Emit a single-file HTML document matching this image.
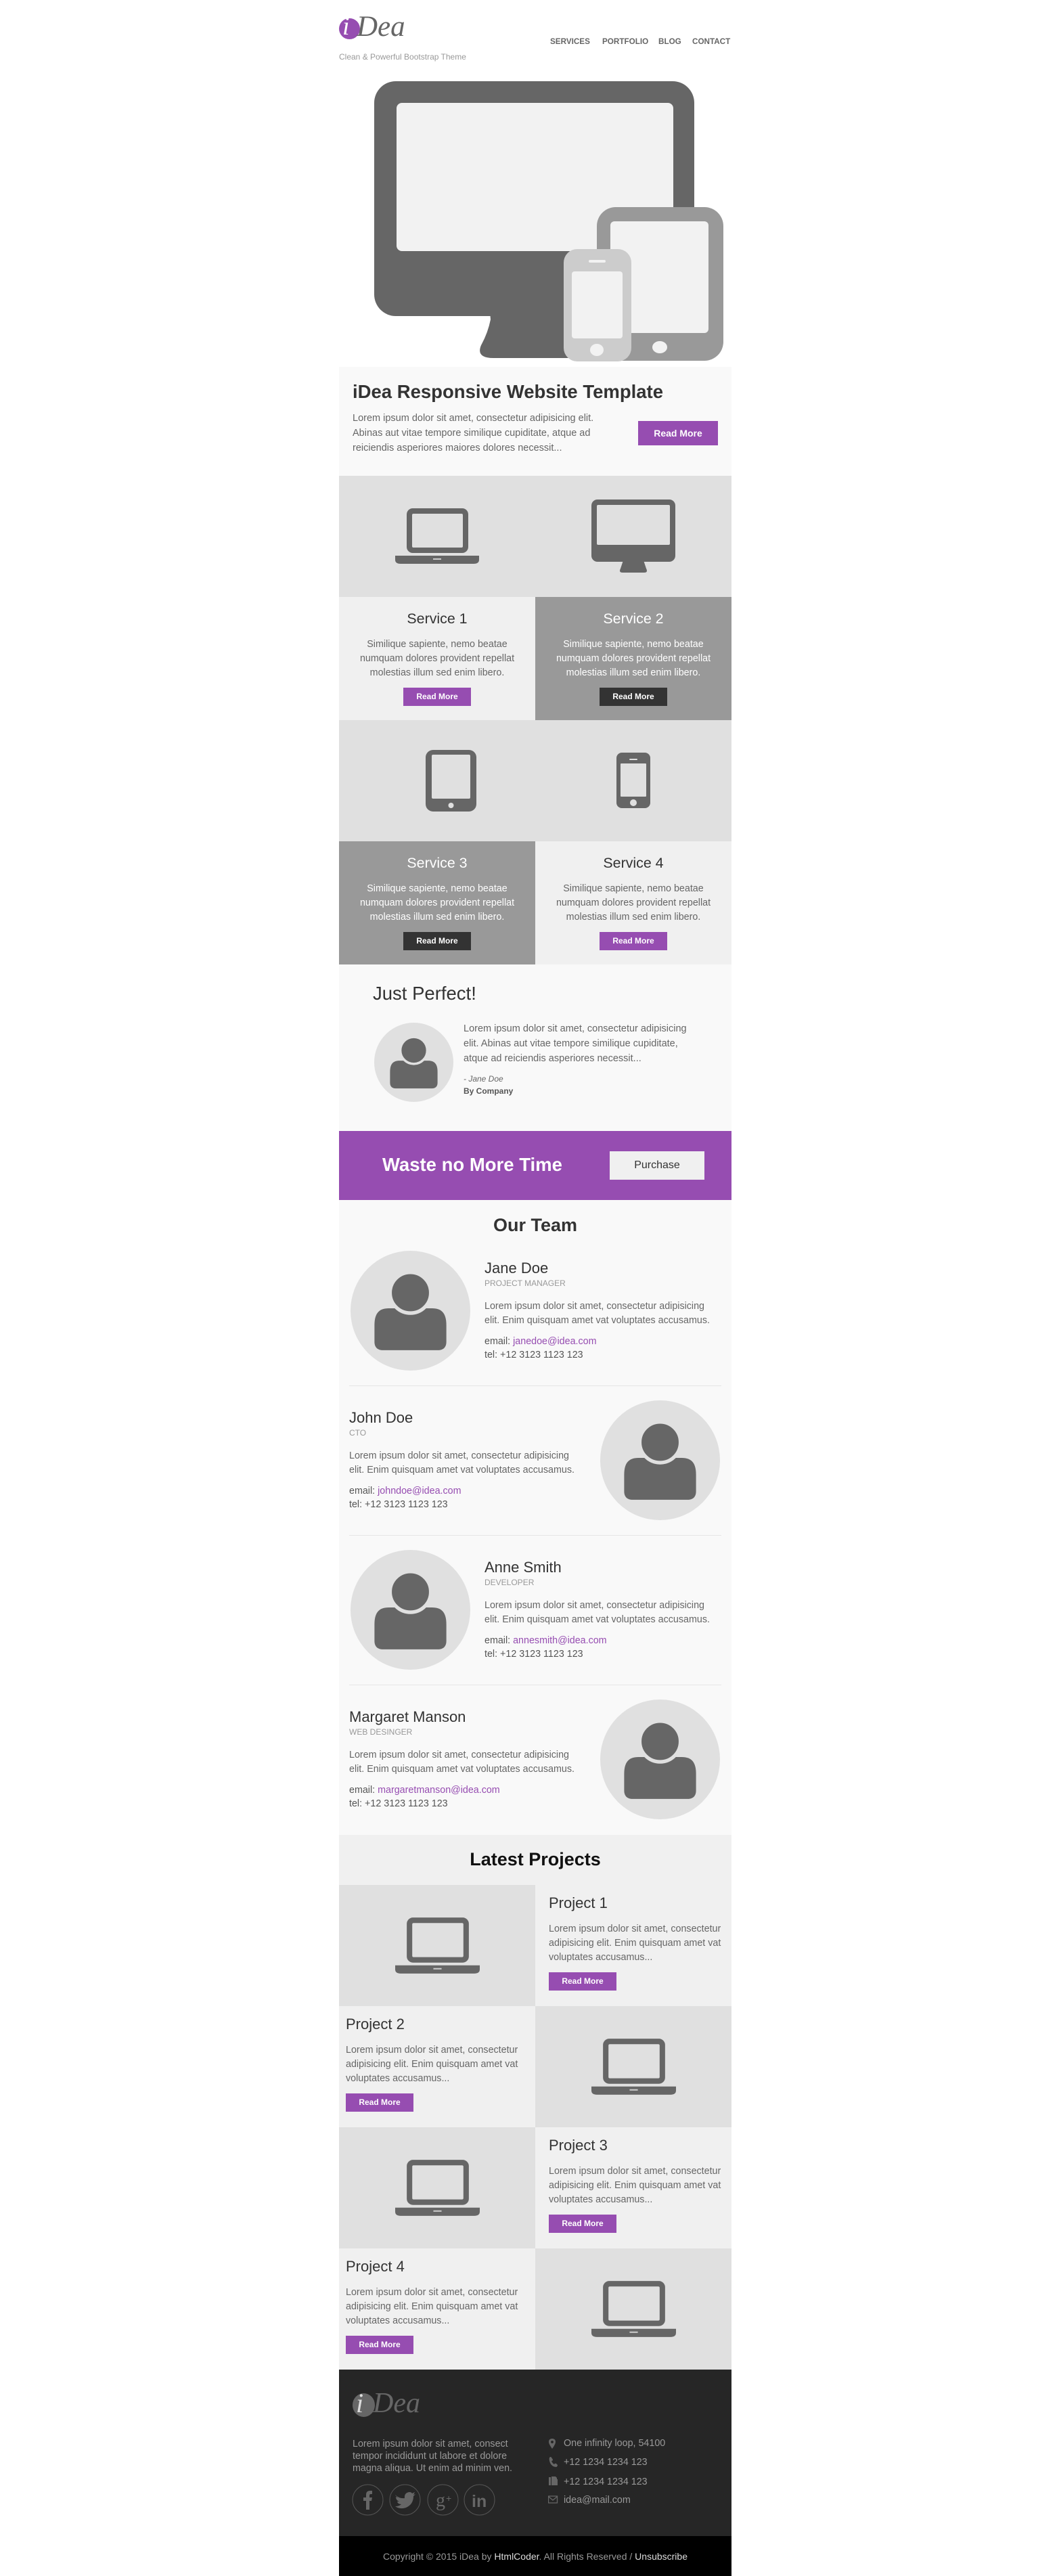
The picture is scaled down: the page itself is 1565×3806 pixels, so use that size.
<!DOCTYPE html>
<html><head><meta charset="utf-8"><style>
*{margin:0;padding:0;box-sizing:border-box}
html,body{width:1565px;height:3806px;background:#fff;overflow:hidden;font-family:"Liberation Sans",Arial,sans-serif}
.a{position:absolute}
.t{position:absolute;white-space:nowrap}
.btn{position:absolute;background:#964db1;color:#fff;font-weight:bold;font-size:12px;text-align:center;line-height:27px;width:100px;height:27px}
.dk{background:#333}
.p{font-size:14.3px;line-height:21px;color:#666}
.nm{font-size:22px;color:#333;line-height:26px}
.rl{font-size:12px;color:#999;line-height:14px}
.pu{color:#964db1}
</style></head><body>

<!-- header -->
<div class="a" style="left:501px;top:27px;width:31px;height:31px;border-radius:50%;background:#964db1"></div>
<div class="t" style="left:506px;top:18px;font:italic 38px 'Liberation Serif',serif;color:#fff;line-height:42px">i</div>
<div class="t" style="left:527px;top:16px;font:italic 43px 'Liberation Serif',serif;color:#666;line-height:48px">Dea</div>
<div class="t" style="left:501px;top:77px;font-size:12px;color:#999;line-height:14px">Clean &amp; Powerful Bootstrap Theme</div>
<div class="t" style="left:813px;top:55px;font-size:11.7px;font-weight:bold;color:#666;line-height:14px">SERVICES</div>
<div class="t" style="left:890px;top:55px;font-size:11.7px;font-weight:bold;color:#666;line-height:14px">PORTFOLIO</div>
<div class="t" style="left:973px;top:55px;font-size:11.7px;font-weight:bold;color:#666;line-height:14px">BLOG</div>
<div class="t" style="left:1023px;top:55px;font-size:11.7px;font-weight:bold;color:#666;line-height:14px">CONTACT</div>

<!-- hero -->
<svg class="a" style="left:553px;top:120px" width="516" height="414" viewBox="0 0 516 414">
<path d="M170 330 L172 352 Q168 372 158 390 Q150 409 176 409 L360 409 L360 330 Z" fill="#666"/>
<rect x="0" y="0" width="473" height="347" rx="32" fill="#666"/>
<rect x="33" y="32" width="409" height="219" rx="8" fill="#f2f2f2"/>
<rect x="329" y="186" width="187" height="227" rx="28" fill="#999"/>
<rect x="349" y="207" width="145" height="165" rx="6" fill="#f2f2f2"/>
<ellipse cx="422" cy="393" rx="11" ry="9" fill="#f2f2f2"/>
<rect x="280" y="248" width="100" height="166" rx="20" fill="#ccc"/>
<rect x="292" y="281" width="75" height="99" rx="4" fill="#f2f2f2"/>
<rect x="317" y="264" width="25" height="4" rx="2" fill="#f2f2f2"/>
<ellipse cx="329" cy="397" rx="10" ry="9" fill="#f2f2f2"/>
</svg>

<div class="a" style="left:501px;top:542px;width:580px;height:161px;background:#f9f9f9"></div>
<div class="t" style="left:521px;top:563px;font-size:27.5px;font-weight:bold;color:#333;line-height:32px">iDea Responsive Website Template</div>
<div class="a p" style="left:521px;top:607px;width:400px;font-size:14.5px;line-height:22px">Lorem ipsum dolor sit amet, consectetur adipisicing elit.<br>Abinas aut vitae tempore similique cupiditate, atque ad<br>reiciendis asperiores maiores dolores necessit...</div>
<div class="btn" style="left:943px;top:622px;width:118px;height:36px;line-height:36px;font-size:14px">Read More</div>

<!-- services -->
<div class="a" style="left:501px;top:703px;width:580px;height:179px;background:#e0e0e0"></div>
<div class="a" style="left:501px;top:882px;width:290px;height:182px;background:#f0f0f0"></div>
<div class="a" style="left:791px;top:882px;width:290px;height:182px;background:#999"></div>
<div class="a" style="left:501px;top:1064px;width:580px;height:179px;background:#e0e0e0"></div>
<div class="a" style="left:501px;top:1243px;width:290px;height:182px;background:#999"></div>
<div class="a" style="left:791px;top:1243px;width:290px;height:182px;background:#f0f0f0"></div>

<svg class="a" style="left:584px;top:751px" width="124" height="82" viewBox="0 0 124 82">
<rect x="17" y="0" width="91" height="66" rx="9" fill="#666"/><rect x="25" y="8" width="75" height="50" rx="2" fill="#e0e0e0"/>
<path d="M0 70 H124 V76 Q124 82 116 82 H8 Q0 82 0 76 Z" fill="#666"/><rect x="56" y="74" width="12" height="2" fill="#ccc"/></svg>
<svg class="a" style="left:874px;top:738px" width="124" height="108" viewBox="0 0 124 108">
<rect x="0" y="0" width="124" height="92" rx="9" fill="#666"/><rect x="8" y="8" width="108" height="59" rx="2" fill="#e0e0e0"/>
<path d="M47 90 H77 L81 102 Q84 108 78 108 H46 Q40 108 43 102 Z" fill="#666"/></svg>
<svg class="a" style="left:629px;top:1108px" width="75" height="91" viewBox="0 0 75 91">
<rect width="75" height="91" rx="11" fill="#666"/><rect x="9" y="7" width="57" height="65" rx="2" fill="#e0e0e0"/><circle cx="37.5" cy="82" r="4" fill="#e0e0e0"/></svg>
<svg class="a" style="left:911px;top:1112px" width="50" height="82" viewBox="0 0 50 82">
<rect width="50" height="82" rx="8" fill="#666"/><rect x="6" y="16" width="38" height="49" rx="1" fill="#e0e0e0"/><rect x="19" y="9" width="12" height="2" rx="1" fill="#e0e0e0"/><circle cx="25" cy="74" r="5" fill="#e0e0e0"/></svg>

<div class="t" style="left:501px;width:290px;text-align:center;top:901px;font-size:21.4px;color:#333;line-height:26px">Service 1</div>
<div class="a p" style="left:501px;width:290px;text-align:center;top:942px">Similique sapiente, nemo beatae<br>numquam dolores provident repellat<br>molestias illum sed enim libero.</div>
<div class="btn" style="left:596px;top:1016px">Read More</div>
<div class="t" style="left:791px;width:290px;text-align:center;top:901px;font-size:21.4px;color:#fff;line-height:26px">Service 2</div>
<div class="a p" style="left:791px;width:290px;text-align:center;top:942px;color:#fff">Similique sapiente, nemo beatae<br>numquam dolores provident repellat<br>molestias illum sed enim libero.</div>
<div class="btn dk" style="left:886px;top:1016px">Read More</div>
<div class="t" style="left:501px;width:290px;text-align:center;top:1262px;font-size:21.4px;color:#fff;line-height:26px">Service 3</div>
<div class="a p" style="left:501px;width:290px;text-align:center;top:1303px;color:#fff">Similique sapiente, nemo beatae<br>numquam dolores provident repellat<br>molestias illum sed enim libero.</div>
<div class="btn dk" style="left:596px;top:1377px">Read More</div>
<div class="t" style="left:791px;width:290px;text-align:center;top:1262px;font-size:21.4px;color:#333;line-height:26px">Service 4</div>
<div class="a p" style="left:791px;width:290px;text-align:center;top:1303px">Similique sapiente, nemo beatae<br>numquam dolores provident repellat<br>molestias illum sed enim libero.</div>
<div class="btn" style="left:886px;top:1377px">Read More</div>

<!-- testimonial -->
<div class="a" style="left:501px;top:1425px;width:580px;height:246px;background:#f9f9f9"></div>
<div class="t" style="left:551px;top:1452px;font-size:27.5px;color:#333;line-height:32px">Just Perfect!</div>
<svg class="a" style="left:553px;top:1511px" width="117" height="117" viewBox="0 0 100 100"><circle cx="50" cy="50" r="50" fill="#e0e0e0"/><path d="M20 62 C20 52 24 48 32 48 L68 48 C76 48 80 52 80 62 L80 76 C80 81 77 83 73 83 L27 83 C23 83 20 81 20 76 Z" fill="#666"/><circle cx="50" cy="35" r="17" fill="#666" stroke="#e0e0e0" stroke-width="3"/></svg>
<div class="a p" style="left:685px;top:1509px;font-size:14.5px;line-height:22px">Lorem ipsum dolor sit amet, consectetur adipisicing<br>elit. Abinas aut vitae tempore similique cupiditate,<br>atque ad reiciendis asperiores necessit...</div>
<div class="t" style="left:685px;top:1587px;font-size:12px;font-style:italic;color:#666;line-height:14px">- Jane Doe</div>
<div class="t" style="left:685px;top:1605px;font-size:12px;font-weight:bold;color:#555;line-height:14px">By Company</div>

<!-- banner -->
<div class="a" style="left:501px;top:1671px;width:580px;height:102px;background:#964db1"></div>
<div class="t" style="left:565px;top:1705px;font-size:27.5px;font-weight:bold;color:#fff;line-height:32px">Waste no More Time</div>
<div class="a" style="left:901px;top:1701px;width:140px;height:42px;background:#f0f0f0;color:#333;font-size:16px;line-height:42px;text-align:center">Purchase</div>

<!-- team -->
<div class="a" style="left:501px;top:1773px;width:580px;height:938px;background:#f9f9f9"></div>
<div class="t" style="left:501px;width:580px;text-align:center;top:1794px;font-size:27px;font-weight:bold;color:#333;line-height:32px">Our Team</div>

<svg class="a" style="left:518px;top:1848px" width="177" height="177" viewBox="0 0 100 100"><circle cx="50" cy="50" r="50" fill="#e0e0e0"/><path d="M20 62 C20 52 24 48 32 48 L68 48 C76 48 80 52 80 62 L80 76 C80 81 77 83 73 83 L27 83 C23 83 20 81 20 76 Z" fill="#666"/><circle cx="50" cy="35" r="17" fill="#666" stroke="#e0e0e0" stroke-width="3"/></svg>
<div class="t nm" style="left:716px;top:1861px">Jane Doe</div>
<div class="t rl" style="left:716px;top:1889px">PROJECT MANAGER</div>
<div class="a p" style="left:716px;top:1920px">Lorem ipsum dolor sit amet, consectetur adipisicing<br>elit. Enim quisquam amet vat voluptates accusamus.</div>
<div class="a p" style="left:716px;top:1972px;color:#555;line-height:20px">email: <span class="pu">janedoe@idea.com</span><br>tel: +12 3123 1123 123</div>
<div class="a" style="left:516px;top:2047px;width:550px;height:1px;background:#e6e6e6"></div>

<svg class="a" style="left:887px;top:2069px" width="177" height="177" viewBox="0 0 100 100"><circle cx="50" cy="50" r="50" fill="#e0e0e0"/><path d="M20 62 C20 52 24 48 32 48 L68 48 C76 48 80 52 80 62 L80 76 C80 81 77 83 73 83 L27 83 C23 83 20 81 20 76 Z" fill="#666"/><circle cx="50" cy="35" r="17" fill="#666" stroke="#e0e0e0" stroke-width="3"/></svg>
<div class="t nm" style="left:516px;top:2082px">John Doe</div>
<div class="t rl" style="left:516px;top:2110px">CTO</div>
<div class="a p" style="left:516px;top:2141px">Lorem ipsum dolor sit amet, consectetur adipisicing<br>elit. Enim quisquam amet vat voluptates accusamus.</div>
<div class="a p" style="left:516px;top:2193px;color:#555;line-height:20px">email: <span class="pu">johndoe@idea.com</span><br>tel: +12 3123 1123 123</div>
<div class="a" style="left:516px;top:2268px;width:550px;height:1px;background:#e6e6e6"></div>

<svg class="a" style="left:518px;top:2290px" width="177" height="177" viewBox="0 0 100 100"><circle cx="50" cy="50" r="50" fill="#e0e0e0"/><path d="M20 62 C20 52 24 48 32 48 L68 48 C76 48 80 52 80 62 L80 76 C80 81 77 83 73 83 L27 83 C23 83 20 81 20 76 Z" fill="#666"/><circle cx="50" cy="35" r="17" fill="#666" stroke="#e0e0e0" stroke-width="3"/></svg>
<div class="t nm" style="left:716px;top:2303px">Anne Smith</div>
<div class="t rl" style="left:716px;top:2331px">DEVELOPER</div>
<div class="a p" style="left:716px;top:2362px">Lorem ipsum dolor sit amet, consectetur adipisicing<br>elit. Enim quisquam amet vat voluptates accusamus.</div>
<div class="a p" style="left:716px;top:2414px;color:#555;line-height:20px">email: <span class="pu">annesmith@idea.com</span><br>tel: +12 3123 1123 123</div>
<div class="a" style="left:516px;top:2489px;width:550px;height:1px;background:#e6e6e6"></div>

<svg class="a" style="left:887px;top:2511px" width="177" height="177" viewBox="0 0 100 100"><circle cx="50" cy="50" r="50" fill="#e0e0e0"/><path d="M20 62 C20 52 24 48 32 48 L68 48 C76 48 80 52 80 62 L80 76 C80 81 77 83 73 83 L27 83 C23 83 20 81 20 76 Z" fill="#666"/><circle cx="50" cy="35" r="17" fill="#666" stroke="#e0e0e0" stroke-width="3"/></svg>
<div class="t nm" style="left:516px;top:2524px">Margaret Manson</div>
<div class="t rl" style="left:516px;top:2552px">WEB DESINGER</div>
<div class="a p" style="left:516px;top:2583px">Lorem ipsum dolor sit amet, consectetur adipisicing<br>elit. Enim quisquam amet vat voluptates accusamus.</div>
<div class="a p" style="left:516px;top:2635px;color:#555;line-height:20px">email: <span class="pu">margaretmanson@idea.com</span><br>tel: +12 3123 1123 123</div>

<!-- projects -->
<div class="a" style="left:501px;top:2711px;width:580px;height:790px;background:#f0f0f0"></div>
<div class="t" style="left:501px;width:580px;text-align:center;top:2731px;font-size:27px;font-weight:bold;color:#111;line-height:32px">Latest Projects</div>
<div class="a" style="left:501px;top:2785px;width:290px;height:179px;background:#e0e0e0"></div>
<div class="a" style="left:791px;top:2964px;width:290px;height:179px;background:#e0e0e0"></div>
<div class="a" style="left:501px;top:3143px;width:290px;height:179px;background:#e0e0e0"></div>
<div class="a" style="left:791px;top:3322px;width:290px;height:179px;background:#e0e0e0"></div>

<svg class="a" style="left:584px;top:2833px" width="125" height="83" viewBox="0 0 124 82"><rect x="17" y="0" width="91" height="66" rx="9" fill="#666"/><rect x="25" y="8" width="75" height="50" rx="2" fill="#e0e0e0"/><path d="M0 70 H124 V76 Q124 82 116 82 H8 Q0 82 0 76 Z" fill="#666"/><rect x="56" y="74" width="12" height="2" fill="#ccc"/></svg>
<svg class="a" style="left:874px;top:3012px" width="125" height="83" viewBox="0 0 124 82"><rect x="17" y="0" width="91" height="66" rx="9" fill="#666"/><rect x="25" y="8" width="75" height="50" rx="2" fill="#e0e0e0"/><path d="M0 70 H124 V76 Q124 82 116 82 H8 Q0 82 0 76 Z" fill="#666"/><rect x="56" y="74" width="12" height="2" fill="#ccc"/></svg>
<svg class="a" style="left:584px;top:3191px" width="125" height="83" viewBox="0 0 124 82"><rect x="17" y="0" width="91" height="66" rx="9" fill="#666"/><rect x="25" y="8" width="75" height="50" rx="2" fill="#e0e0e0"/><path d="M0 70 H124 V76 Q124 82 116 82 H8 Q0 82 0 76 Z" fill="#666"/><rect x="56" y="74" width="12" height="2" fill="#ccc"/></svg>
<svg class="a" style="left:874px;top:3370px" width="125" height="83" viewBox="0 0 124 82"><rect x="17" y="0" width="91" height="66" rx="9" fill="#666"/><rect x="25" y="8" width="75" height="50" rx="2" fill="#e0e0e0"/><path d="M0 70 H124 V76 Q124 82 116 82 H8 Q0 82 0 76 Z" fill="#666"/><rect x="56" y="74" width="12" height="2" fill="#ccc"/></svg>

<div class="t nm" style="left:811px;top:2799px">Project 1</div>
<div class="a p" style="left:811px;top:2840px">Lorem ipsum dolor sit amet, consectetur<br>adipisicing elit. Enim quisquam amet vat<br>voluptates accusamus...</div>
<div class="btn" style="left:811px;top:2914px">Read More</div>
<div class="t nm" style="left:511px;top:2978px">Project 2</div>
<div class="a p" style="left:511px;top:3019px">Lorem ipsum dolor sit amet, consectetur<br>adipisicing elit. Enim quisquam amet vat<br>voluptates accusamus...</div>
<div class="btn" style="left:511px;top:3093px">Read More</div>
<div class="t nm" style="left:811px;top:3157px">Project 3</div>
<div class="a p" style="left:811px;top:3198px">Lorem ipsum dolor sit amet, consectetur<br>adipisicing elit. Enim quisquam amet vat<br>voluptates accusamus...</div>
<div class="btn" style="left:811px;top:3272px">Read More</div>
<div class="t nm" style="left:511px;top:3336px">Project 4</div>
<div class="a p" style="left:511px;top:3377px">Lorem ipsum dolor sit amet, consectetur<br>adipisicing elit. Enim quisquam amet vat<br>voluptates accusamus...</div>
<div class="btn" style="left:511px;top:3451px">Read More</div>

<!-- footer -->
<div class="a" style="left:501px;top:3501px;width:580px;height:246px;background:#262626"></div>
<div class="a" style="left:501px;top:3747px;width:580px;height:59px;background:#000"></div>
<div class="a" style="left:521px;top:3536px;width:33px;height:35px;border-radius:50%;background:#666"></div>
<div class="t" style="left:526px;top:3529px;font:italic 40px 'Liberation Serif',serif;color:#ddd;line-height:44px">i</div>
<div class="t" style="left:551px;top:3528px;font:italic 42px 'Liberation Serif',serif;color:#666;line-height:46px">Dea</div>
<div class="a p" style="left:521px;top:3602px;color:#999;line-height:18px">Lorem ipsum dolor sit amet, consect<br>tempor incididunt ut labore et dolore<br>magna aliqua. Ut enim ad minim ven.</div>

<svg class="a" style="left:520px;top:3670px" width="214" height="48" viewBox="0 0 214 48">
<g fill="none" stroke="#555" stroke-width="1"><circle cx="23.5" cy="23.5" r="22.5"/><circle cx="78.5" cy="23.5" r="22.5"/><circle cx="134.5" cy="23.5" r="22.5"/><circle cx="188.5" cy="23.5" r="22.5"/></g>
<path d="M21 38 V25 H17 V20 H21 V16 Q21 10 27 10 H30 V15 H28 Q26 15 26 17 V20 H30 L29 25 H26 V38 Z" fill="#666"/>
<path d="M64 16 Q70 22 78 21 Q77 13 85 12 Q88 12 89 14 L93 12 L91 16 L94 15 L91 18 Q91 30 80 35 Q71 38 64 33 Q70 33 73 30 Q68 30 67 26 L70 26 Q65 24 65 19 L68 20 Q64 17 64 16 Z" fill="#666"/>
<text x="124" y="33" font-family="Liberation Serif,serif" font-size="28" fill="#666">g</text>
<text x="139" y="26" font-family="Liberation Sans,sans-serif" font-size="14" fill="#666">+</text>
<text x="177" y="34" font-family="Liberation Sans,sans-serif" font-weight="bold" font-size="25" fill="#666">in</text>
</svg>

<svg class="a" style="left:810px;top:3602px" width="16" height="100" viewBox="0 0 16 100" fill="#666">
<path d="M6 1 Q1 1 1 6 Q1 9 6 16 Q11 9 11 6 Q11 1 6 1 Z M6 4 A2 2 0 1 0 6.01 4 Z" fill-rule="evenodd"/>
<path d="M2 29 Q4 27 5 29 L7 32 Q7 34 5 34 Q6 37 9 39 Q10 37 12 38 L14 40 Q14 42 12 43 Q6 43 3 37 Q1 32 2 29 Z"/>
<path d="M1 58 H4 V70 H1 Z M5 57 H11 L13 59 V61 H14 V70 H5 Z" />
<path d="M0.5 86 H13.5 V96 H0.5 Z M1 87 L7 92 L13 87" fill="none" stroke="#666" stroke-width="1.3"/>
</svg>
<div class="t" style="left:833px;top:3600px;font-size:14.3px;color:#999;line-height:20px">One infinity loop, 54100</div>
<div class="t" style="left:833px;top:3628px;font-size:14.3px;color:#999;line-height:20px">+12 1234 1234 123</div>
<div class="t" style="left:833px;top:3657px;font-size:14.3px;color:#999;line-height:20px">+12 1234 1234 123</div>
<div class="t" style="left:833px;top:3684px;font-size:14.3px;color:#999;line-height:20px">idea@mail.com</div>

<div class="t" style="left:501px;width:580px;text-align:center;top:3767px;font-size:14px;color:#999;line-height:20px">Copyright © 2015 iDea by <span style="color:#ddd">HtmlCoder</span>. All Rights Reserved / <span style="color:#ddd">Unsubscribe</span></div>
</body></html>
